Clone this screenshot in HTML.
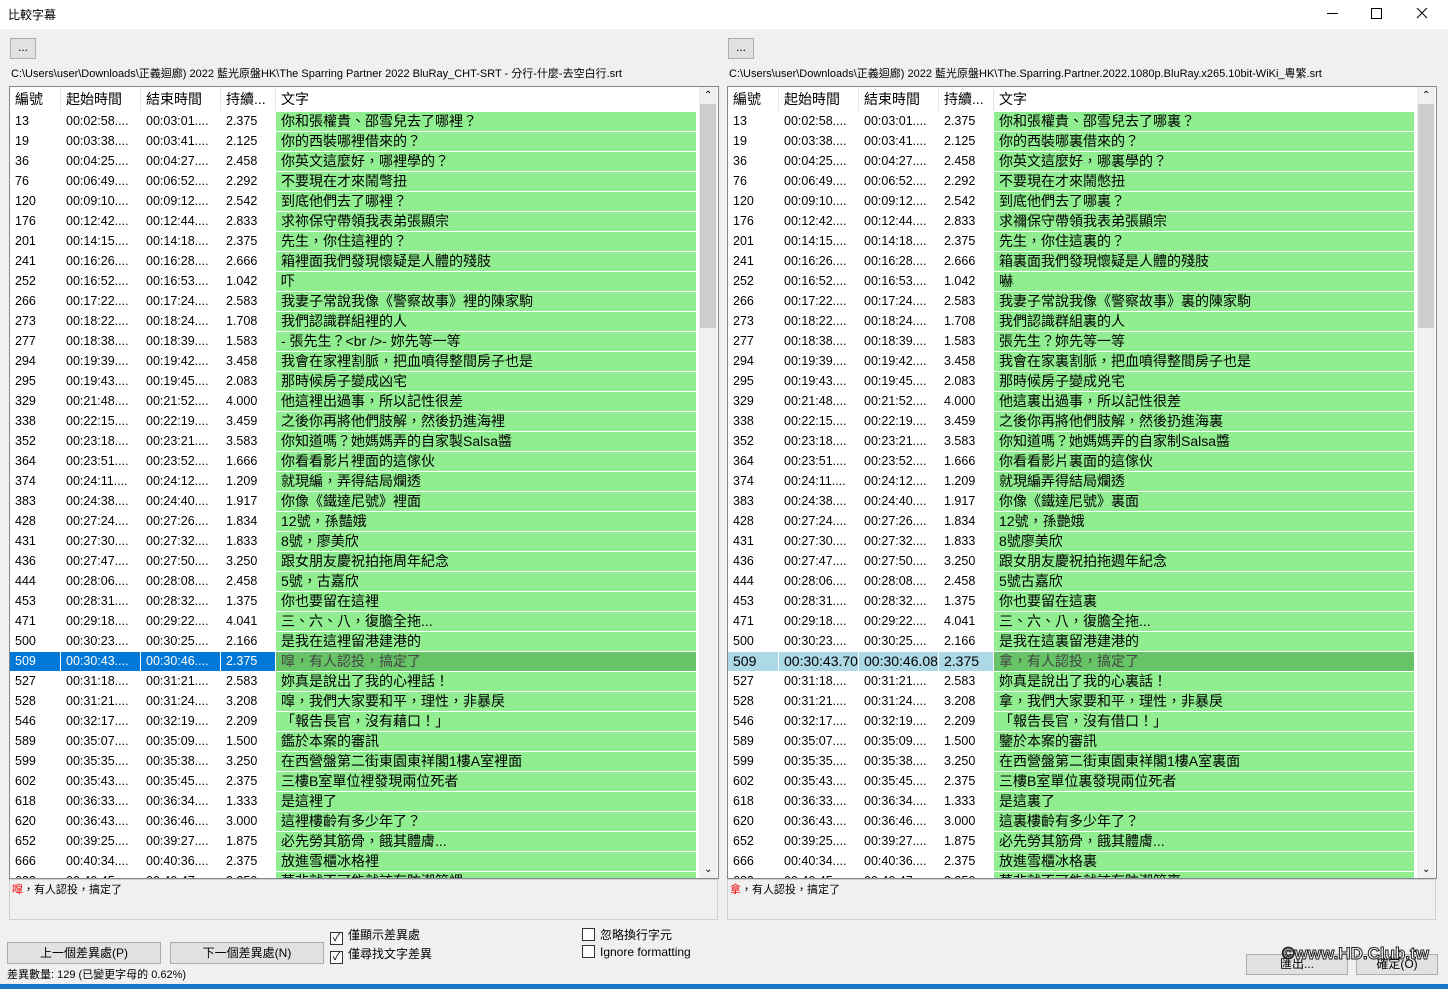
<!DOCTYPE html><html><head><meta charset="utf-8"><style>
*{margin:0;padding:0;box-sizing:border-box}
body{width:1448px;height:989px;background:#f0f0f0;font-family:"Liberation Sans","Noto Sans CJK TC",sans-serif;position:relative;overflow:hidden;color:#000}
.title{position:absolute;left:0;top:0;width:1448px;height:29px;background:#fff;font-size:12px}
.title span{position:absolute;left:8px;top:6px}
.btn{position:absolute;background:#e1e1e1;border:1px solid #adadad;font-size:12px;text-align:center}
.path{position:absolute;top:65px;font-size:11px;white-space:nowrap}
.list{position:absolute;top:86px;height:793px;background:#fff;border:1px solid #828790;overflow:hidden}
.row{position:absolute;left:0;height:20px;font-size:12.5px;white-space:nowrap}
.row div{position:absolute;top:0;height:19px;line-height:19px;padding-left:5px;overflow:hidden}
.hdr div{font-size:14px;line-height:24px;height:24px;padding-left:5px;position:absolute;top:0;border-right:1px solid #e5e5e5}
.t{background:#90ee90;font-size:14px!important}
.sb{position:absolute;top:0;width:18px;height:791px;background:#f0f0f0}
.thumb{position:absolute;left:1px;width:16px;background:#cdcdcd}
.box{position:absolute;top:879px;height:41px;background:#f0f0f0;border:1px solid #d0d0d0;font-size:11px;padding:1px 2px}
.cb{position:absolute;font-size:12px;white-space:nowrap}
.cb i{display:inline-block;width:13px;height:13px;border:1px solid #333;background:#fff;vertical-align:-2px;margin-right:5px;font-style:normal;font-size:11px;line-height:11px;text-align:center}
</style></head><body>
<div class="title"><span>比較字幕</span>
<svg style="position:absolute;left:1320px;top:6px" width="120" height="16"><line x1="7" y1="7.5" x2="18" y2="7.5" stroke="#000"/><rect x="51.5" y="2.5" width="10" height="10" fill="none" stroke="#000"/><path d="M97 2l10 10M107 2l-10 10" stroke="#000"/></svg></div>
<div class="btn" style="left:10px;top:38px;width:26px;height:21px;line-height:17px">...</div>
<div class="btn" style="left:728px;top:38px;width:26px;height:21px;line-height:17px">...</div>
<div class="path" style="left:11px">C:\Users\user\Downloads\正義迴廊) 2022 藍光原盤HK\The Sparring Partner 2022 BluRay_CHT-SRT - 分行-什麼-去空白行.srt</div>
<div class="path" style="left:729px">C:\Users\user\Downloads\正義迴廊) 2022 藍光原盤HK\The.Sparring.Partner.2022.1080p.BluRay.x265.10bit-WiKi_粵繁.srt</div>
<div class="list" id="L" style="left:9px;width:710px"></div>
<div class="list" id="R" style="left:727px;width:710px"></div>
<div class="box" style="left:9px;width:709px"><span style="color:#e00">噑</span>，有人認投，搞定了</div>
<div class="box" style="left:727px;width:709px"><span style="color:#e00">拿</span>，有人認投，搞定了</div>
<div class="cb" style="left:330px;top:926px"><i>✓</i>僅顯示差異處</div>
<div class="cb" style="left:330px;top:945px"><i>✓</i>僅尋找文字差異</div>
<div class="cb" style="left:582px;top:926px"><i></i>忽略換行字元</div>
<div class="cb" style="left:582px;top:945px"><i></i>Ignore formatting</div>
<div class="btn" style="left:7px;top:942px;width:154px;height:22px;line-height:20px">上一個差異處(P)</div>
<div class="btn" style="left:170px;top:942px;width:154px;height:22px;line-height:20px">下一個差異處(N)</div>
<div style="position:absolute;left:7px;top:966px;font-size:11px">差異數量: 129 (已變更字母的 0.62%)</div>
<div class="btn" style="left:1246px;top:954px;width:102px;height:21px;line-height:19px">匯出...</div>
<div class="btn" style="left:1356px;top:954px;width:82px;height:21px;line-height:19px">確定(O)</div>
<div style="position:absolute;left:1282px;top:944px;font-size:17px;font-weight:bold;color:#fff;-webkit-text-stroke:1px #222">©www.HD.Club.tw</div>
<div style="position:absolute;left:0;top:984px;width:1448px;height:5px;background:#1578c8"></div>
<script>
var d=[["13","00:02:58","00:03:01","2.375","你和張權貴、邵雪兒去了哪裡？","你和張權貴、邵雪兒去了哪裏？"],
["19","00:03:38","00:03:41","2.125","你的西裝哪裡借來的？","你的西裝哪裏借來的？"],
["36","00:04:25","00:04:27","2.458","你英文這麼好，哪裡學的？","你英文這麼好，哪裏學的？"],
["76","00:06:49","00:06:52","2.292","不要現在才來鬧彆扭","不要現在才來鬧憋扭"],
["120","00:09:10","00:09:12","2.542","到底他們去了哪裡？","到底他們去了哪裏？"],
["176","00:12:42","00:12:44","2.833","求祢保守帶領我表弟張顯宗","求禰保守帶領我表弟張顯宗"],
["201","00:14:15","00:14:18","2.375","先生，你住這裡的？","先生，你住這裏的？"],
["241","00:16:26","00:16:28","2.666","箱裡面我們發現懷疑是人體的殘肢","箱裏面我們發現懷疑是人體的殘肢"],
["252","00:16:52","00:16:53","1.042","吓","嚇"],
["266","00:17:22","00:17:24","2.583","我妻子常說我像《警察故事》裡的陳家駒","我妻子常說我像《警察故事》裏的陳家駒"],
["273","00:18:22","00:18:24","1.708","我們認識群組裡的人","我們認識群組裏的人"],
["277","00:18:38","00:18:39","1.583","- 張先生？<br />- 妳先等一等","張先生？妳先等一等"],
["294","00:19:39","00:19:42","3.458","我會在家裡割脈，把血噴得整間房子也是","我會在家裏割脈，把血噴得整間房子也是"],
["295","00:19:43","00:19:45","2.083","那時候房子變成凶宅","那時候房子變成兇宅"],
["329","00:21:48","00:21:52","4.000","他這裡出過事，所以記性很差","他這裏出過事，所以記性很差"],
["338","00:22:15","00:22:19","3.459","之後你再將他們肢解，然後扔進海裡","之後你再將他們肢解，然後扔進海裏"],
["352","00:23:18","00:23:21","3.583","你知道嗎？她媽媽弄的自家製Salsa醬","你知道嗎？她媽媽弄的自家制Salsa醬"],
["364","00:23:51","00:23:52","1.666","你看看影片裡面的這傢伙","你看看影片裏面的這傢伙"],
["374","00:24:11","00:24:12","1.209","就現編，弄得結局爛透","就現編弄得結局爛透"],
["383","00:24:38","00:24:40","1.917","你像《鐵達尼號》裡面","你像《鐵達尼號》裏面"],
["428","00:27:24","00:27:26","1.834","12號，孫豔娥","12號，孫艷娥"],
["431","00:27:30","00:27:32","1.833","8號，廖美欣","8號廖美欣"],
["436","00:27:47","00:27:50","3.250","跟女朋友慶祝拍拖周年紀念","跟女朋友慶祝拍拖週年紀念"],
["444","00:28:06","00:28:08","2.458","5號，古嘉欣","5號古嘉欣"],
["453","00:28:31","00:28:32","1.375","你也要留在這裡","你也要留在這裏"],
["471","00:29:18","00:29:22","4.041","三、六、八，復膽全拖...","三、六、八，復膽全拖..."],
["500","00:30:23","00:30:25","2.166","是我在這裡留港建港的","是我在這裏留港建港的"],
["509","00:30:43","00:30:46","2.375","噑，有人認投，搞定了","拿，有人認投，搞定了"],
["527","00:31:18","00:31:21","2.583","妳真是說出了我的心裡話！","妳真是說出了我的心裏話！"],
["528","00:31:21","00:31:24","3.208","噑，我們大家要和平，理性，非暴戾","拿，我們大家要和平，理性，非暴戾"],
["546","00:32:17","00:32:19","2.209","「報告長官，沒有藉口！」","「報告長官，沒有借口！」"],
["589","00:35:07","00:35:09","1.500","鑑於本案的審訊","鑒於本案的審訊"],
["599","00:35:35","00:35:38","3.250","在西營盤第二街東園東祥閣1樓A室裡面","在西營盤第二街東園東祥閣1樓A室裏面"],
["602","00:35:43","00:35:45","2.375","三樓B室單位裡發現兩位死者","三樓B室單位裏發現兩位死者"],
["618","00:36:33","00:36:34","1.333","是這裡了","是這裏了"],
["620","00:36:43","00:36:46","3.000","這裡樓齡有多少年了？","這裏樓齡有多少年了？"],
["652","00:39:25","00:39:27","1.875","必先勞其筋骨，餓其體膚...","必先勞其筋骨，餓其體膚..."],
["666","00:40:34","00:40:36","2.375","放進雪櫃冰格裡","放進雪櫃冰格裏"],
["683","00:40:45","00:40:47","2.250","莫非就不可能就該有防潮箱裡","莫非就不可能就該有防潮箱裏"]];
function build(id,right){var el=document.getElementById(id),h='<div class="row hdr" style="top:0;width:690px;height:24px"><div style="left:0;width:51px">編號</div><div style="left:51px;width:80px">起始時間</div><div style="left:131px;width:80px">結束時間</div><div style="left:211px;width:55px">持續...</div><div style="left:266px;width:420px;border:none">文字</div></div>';
d.forEach(function(r,i){var sel=r[0]=="509",y=25+i*20,bg=sel?(right?"#add8e6":"#0078d7"):"#fff",fg=sel&&!right?"#fff":"#000";
var s1=sel&&right?"00:30:43.70":r[1]+"....",s2=sel&&right?"00:30:46.08":r[2]+"....";var fs=sel&&right?"font-size:14px;":"";
h+='<div class="row" style="top:'+y+'px;width:690px;color:'+fg+'"><div style="left:0;width:50px;background:'+bg+';'+fs+'">'+r[0]+'</div><div style="left:51px;width:79px;background:'+bg+';'+fs+'">'+s1+'</div><div style="left:131px;width:79px;background:'+bg+';'+fs+'">'+s2+'</div><div style="left:211px;width:54px;background:'+bg+';'+fs+'">'+r[3]+'</div><div class="t" style="left:266px;width:420px;'+(sel?'background:#66c466;color:#444':'color:#000')+'">'+(right?r[5]:r[4]).replace(/</g,"&lt;")+'</div></div>';});
h+='<div class="sb" style="left:689px"><div style="position:absolute;top:3px;left:5px;font-size:10px">⌃</div><div class="thumb" style="top:17px;height:224px"></div><div style="position:absolute;bottom:3px;left:5px;font-size:10px">⌄</div></div>';
el.innerHTML=h;}
build("L",false);build("R",true);
</script>
</body></html>
